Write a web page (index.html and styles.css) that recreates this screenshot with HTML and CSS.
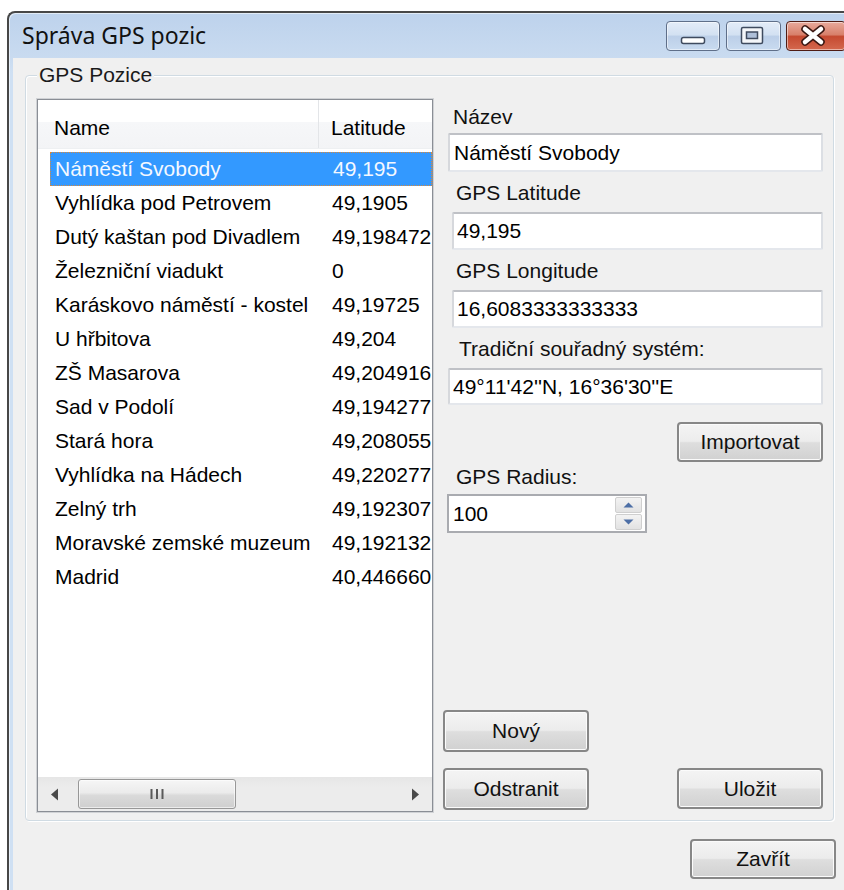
FILE: index.html
```html
<!DOCTYPE html>
<html lang="cs">
<head>
<meta charset="utf-8">
<title>Správa GPS pozic</title>
<link rel="stylesheet" href="styles.css">
</head>
<body>
<div class="window">
  <div class="titlebar">
    <span class="title">Správa GPS pozic</span>
    <div class="caption">
      <div class="cap-btn cap-min">
        <svg width="52" height="28" viewBox="0 0 52 28"><rect x="14.5" y="15.5" width="23" height="6" rx="2" fill="#fff" stroke="#3f4b5f" stroke-width="1.5"/></svg>
      </div>
      <div class="cap-btn cap-max">
        <svg width="53" height="28" viewBox="0 0 53 28"><rect x="14.5" y="5.5" width="21" height="16" rx="1.5" fill="#f4f6f9" stroke="#3f4b5f" stroke-width="1.5"/><rect x="19.5" y="10" width="11" height="6.5" fill="#aebfd8" stroke="#3f4b5f" stroke-width="1.5"/></svg>
      </div>
      <div class="cap-btn cap-close">
        <svg width="58" height="28" viewBox="0 0 58 28"><path d="M18 7 L34 20 M34 7 L18 20" stroke="#3a1712" stroke-width="7.5" stroke-linecap="round"/><path d="M18 7 L34 20 M34 7 L18 20" stroke="#fff" stroke-width="4.5" stroke-linecap="round"/></svg>
      </div>
    </div>
  </div>

  <div class="client">
    <div class="group">
      <span class="group-label">GPS Pozice</span>

      <div class="listview">
        <div class="lv-header">
          <div class="lv-head-name">Name</div>
          <div class="lv-head-lat">Latitude</div>
        </div>
        <div class="lv-body">
          <div class="lv-row selected"><span class="c-name">Náměstí Svobody</span><span class="c-lat">49,195</span></div>
          <div class="lv-row"><span class="c-name">Vyhlídka pod Petrovem</span><span class="c-lat">49,1905</span></div>
          <div class="lv-row"><span class="c-name">Dutý kaštan pod Divadlem</span><span class="c-lat">49,198472</span></div>
          <div class="lv-row"><span class="c-name">Železniční viadukt</span><span class="c-lat">0</span></div>
          <div class="lv-row"><span class="c-name">Karáskovo náměstí - kostel</span><span class="c-lat">49,19725</span></div>
          <div class="lv-row"><span class="c-name">U hřbitova</span><span class="c-lat">49,204</span></div>
          <div class="lv-row"><span class="c-name">ZŠ Masarova</span><span class="c-lat">49,204916</span></div>
          <div class="lv-row"><span class="c-name">Sad v Podolí</span><span class="c-lat">49,194277</span></div>
          <div class="lv-row"><span class="c-name">Stará hora</span><span class="c-lat">49,208055</span></div>
          <div class="lv-row"><span class="c-name">Vyhlídka na Hádech</span><span class="c-lat">49,220277</span></div>
          <div class="lv-row"><span class="c-name">Zelný trh</span><span class="c-lat">49,192307</span></div>
          <div class="lv-row"><span class="c-name">Moravské zemské muzeum</span><span class="c-lat">49,192132</span></div>
          <div class="lv-row"><span class="c-name">Madrid</span><span class="c-lat">40,446660</span></div>
        </div>
        <div class="hscroll">
          <div class="sb-arrow">
            <svg width="10" height="13" viewBox="0 0 10 13"><path d="M8 0.5 L1 6.5 L8 12.5 Z" fill="#4a4a4a"/></svg>
          </div>
          <div class="sb-track">
            <div class="sb-thumb">
              <svg width="16" height="12" viewBox="0 0 16 12"><path d="M2.5 1 V11 M8 1 V11 M13.5 1 V11" stroke="#5a5a5a" stroke-width="2"/></svg>
            </div>
          </div>
          <div class="sb-arrow">
            <svg width="10" height="13" viewBox="0 0 10 13"><path d="M2 0.5 L9 6.5 L2 12.5 Z" fill="#4a4a4a"/></svg>
          </div>
        </div>
      </div>

      <div class="editor">
        <div class="lbl lbl-name">Název</div>
        <div class="field field-name">Náměstí Svobody</div>
        <div class="lbl lbl-lat">GPS Latitude</div>
        <div class="field field-lat">49,195</div>
        <div class="lbl lbl-lon">GPS Longitude</div>
        <div class="field field-lon">16,6083333333333</div>
        <div class="lbl lbl-trad">Tradiční souřadný systém:</div>
        <div class="field field-trad">49°11'42''N, 16°36'30''E</div>
        <button class="btn btn-import">Importovat</button>
        <div class="lbl lbl-rad">GPS Radius:</div>
        <div class="spin">
          <span class="spin-value">100</span>
          <div class="spin-buttons">
            <div class="spin-btn"><svg width="11" height="6" viewBox="0 0 11 6"><path d="M0.5 5.5 L5.5 0.5 L10.5 5.5 Z" fill="#4d6fa6"/></svg></div>
            <div class="spin-btn"><svg width="11" height="6" viewBox="0 0 11 6"><path d="M0.5 0.5 L5.5 5.5 L10.5 0.5 Z" fill="#4d6fa6"/></svg></div>
          </div>
        </div>
        <div class="actions">
          <button class="btn">Nový</button>
          <div class="actions-row">
            <button class="btn">Odstranit</button>
            <button class="btn">Uložit</button>
          </div>
        </div>
      </div>
    </div>

    <div class="footer">
      <button class="btn">Zavřít</button>
    </div>
  </div>
</div>
</body>
</html>
```

FILE: styles.css
```css
html, body {
  margin: 0;
  height: 100%;
  overflow: hidden;
  background: #ffffff;
}

body {
  font-family: "Liberation Sans", Arial, sans-serif;
  font-size: 21px;
  color: #000;
}

/* window frame */
.window {
  margin: 11px 0 0 7px;
  width: 846px;
  height: 890px;
  border-top: 2px solid #474747;
  border-left: 2px solid #474747;
  border-top-left-radius: 8px;
  background: linear-gradient(to bottom, #bdd2ec 0px, #c9dbf0 45px, #cfe0f3 60px, #cfe0f3 100%);
  box-shadow: inset 1px 1px 0 rgba(255, 255, 255, 0.55);
  display: flex;
  flex-direction: column;
}

.titlebar {
  height: 45px;
  flex: none;
  display: flex;
  align-items: flex-start;
  padding: 0 9px 0 13px;
}

.title {
  font-family: "Noto Sans", "Open Sans", sans-serif;
  font-size: 23px;
  line-height: 45px;
  color: #111;
}

.caption {
  margin-left: auto;
  display: flex;
  margin-top: 8px;
}

.cap-btn {
  height: 28px;
  border: 1px solid #5f6f89;
  border-radius: 4px;
  box-shadow: inset 0 0 0 1px rgba(255, 255, 255, 0.5);
  display: flex;
}

.cap-min {
  width: 52px;
  background: linear-gradient(to bottom, #e3ecf8 0%, #d3e1f2 45%, #bccfe8 52%, #c9dbf0 100%);
}

.cap-max {
  width: 53px;
  margin-left: 6px;
  background: linear-gradient(to bottom, #e3ecf8 0%, #d3e1f2 45%, #bccfe8 52%, #c9dbf0 100%);
}

.cap-close {
  width: 58px;
  margin-left: 5px;
  border-color: #4f1c14;
  background: linear-gradient(to bottom, #e8aa9c 0%, #d8806b 45%, #c54a31 52%, #d4684e 100%);
}

/* client area */
.client {
  flex: 1;
  margin-left: 4px;
  background: #f0f0f0;
  padding: 17px 0 0 12px;
}

.group {
  position: relative;
  box-sizing: border-box;
  width: 809px;
  height: 746px;
  border: 1px solid #d0dbe3;
  border-radius: 4px;
  box-shadow: inset 1px 1px 0 #fff, 1px 1px 0 #fff;
  padding: 23px 10px 7px 11px;
  display: flex;
  gap: 10px;
}

.group-label {
  position: absolute;
  top: -13px;
  left: 11px;
  padding: 0 2px;
  line-height: 24px;
  background: #f0f0f0;
  color: #1a1a1a;
}

/* list view */
.listview {
  box-sizing: border-box;
  width: 396px;
  height: 713px;
  border: 1px solid #8a8e95;
  box-shadow: 0 0 0 1px rgba(150, 155, 162, 0.35);
  background: #fff;
  display: flex;
  flex-direction: column;
  overflow: hidden;
}

.lv-header {
  height: 49px;
  flex: none;
  display: flex;
  background: linear-gradient(to bottom, #ffffff 0%, #ffffff 45%, #f6f7f9 46%, #f3f4f6 100%);
  border-bottom: 1px solid #eef0f2;
  box-sizing: border-box;
}

.lv-head-name,
.lv-head-lat {
  padding-top: 16px;
  line-height: 24px;
  white-space: nowrap;
}

.lv-head-name {
  box-sizing: border-box;
  width: 281px;
  padding-left: 16px;
  border-right: 1px solid #e3e5e8;
}

.lv-head-lat {
  padding-left: 12px;
}

.lv-body {
  flex: 1;
  padding-top: 3px;
}

.lv-row {
  height: 34px;
  margin-left: 12px;
  display: flex;
  align-items: center;
  line-height: 24px;
  white-space: nowrap;
  box-sizing: border-box;
}

.c-name {
  box-sizing: border-box;
  width: 269px;
  flex: none;
  padding-left: 5px;
  overflow: hidden;
}

.c-lat {
  padding-left: 13px;
  overflow: hidden;
}

.lv-row.selected {
  background: #3399ff;
  color: #f4f8ff;
  border: 1px dotted #d9893a;
}

.lv-row.selected .c-name {
  padding-left: 4px;
}

/* horizontal scrollbar */
.hscroll {
  height: 34px;
  flex: none;
  display: flex;
  align-items: center;
  background: linear-gradient(to bottom, #e6e6e6 0%, #ececec 30%, #ececec 100%);
}

.sb-arrow {
  width: 34px;
  height: 100%;
  display: flex;
  align-items: center;
  justify-content: center;
  flex: none;
}

.sb-track {
  flex: 1;
  height: 100%;
  display: flex;
  align-items: center;
}

.sb-thumb {
  box-sizing: border-box;
  width: 158px;
  height: 30px;
  margin-left: 6px;
  border: 1px solid #979797;
  border-radius: 3px;
  background: linear-gradient(to bottom, #f6f6f6 0%, #ebebeb 45%, #dadada 55%, #cfcfcf 100%);
  box-shadow: inset 0 0 0 1px rgba(255, 255, 255, 0.6);
  display: flex;
  align-items: center;
  justify-content: center;
}

/* editor column */
.editor {
  width: 380px;
  display: flex;
  flex-direction: column;
  padding-bottom: 3px;
  box-sizing: border-box;
}

.lbl {
  line-height: 24px;
  white-space: nowrap;
  color: #111;
}

.field {
  box-sizing: border-box;
  background: #fff;
  border: 2px solid;
  border-color: #bfc1c6 #dcdfe4 #e4e7ec #d6d8dc;
  border-radius: 2px;
  display: flex;
  align-items: center;
  line-height: 24px;
  white-space: nowrap;
  overflow: hidden;
}

.lbl-name { margin: 6px 0 0 10px; }
.field-name { margin: 4px 0 0 5px; width: 375px; height: 39px; padding-left: 4px; }

.lbl-lat { margin: 9px 0 0 13px; }
.field-lat { margin: 7px 0 0 9px; width: 371px; height: 38px; padding-left: 3px; }

.lbl-lon { margin: 9px 0 0 13px; }
.field-lon { margin: 7px 0 0 9px; width: 371px; height: 38px; padding-left: 3px; }

.lbl-trad { margin: 9px 0 0 16px; }
.field-trad { margin: 7px 0 0 5px; width: 375px; height: 37px; padding-left: 3px; }

.lbl-rad { margin: 3px 0 0 13px; }

/* buttons */
.btn {
  box-sizing: border-box;
  width: 146px;
  height: 41px;
  padding: 0;
  font-family: "Liberation Sans", Arial, sans-serif;
  font-size: 21px;
  color: #111;
  border: 2px solid #878787;
  border-radius: 4px;
  background: linear-gradient(to bottom, #f4f4f4 0%, #ececec 48%, #dedede 52%, #d1d1d1 100%);
  box-shadow: inset 0 0 0 1px #fbfbfb;
}

.btn-import {
  align-self: flex-end;
  margin-top: 17px;
  height: 40px;
}

/* numeric up/down */
.spin {
  box-sizing: border-box;
  margin: 5px 0 0 4px;
  width: 200px;
  height: 39px;
  background: #fff;
  border: 2px solid #a9abb0;
  display: flex;
  align-items: center;
}

.spin-value {
  flex: 1;
  padding-left: 4px;
  line-height: 24px;
}

.spin-buttons {
  width: 27px;
  height: 33px;
  margin-right: 3px;
  display: flex;
  flex-direction: column;
  gap: 1px;
}

.spin-btn {
  flex: 1;
  display: flex;
  align-items: center;
  justify-content: center;
  background: linear-gradient(to bottom, #f3f3f3, #e2e2e2);
  border: 1px solid #cfcfcf;
  border-radius: 2px;
}

.actions {
  margin-top: auto;
  display: flex;
  flex-direction: column;
}

.actions .btn:first-child {
  height: 42px;
}

.actions-row {
  margin-top: 16px;
  display: flex;
  justify-content: space-between;
}

.footer {
  margin-top: 18px;
  padding-left: 665px;
}

.footer .btn {
  height: 40px;
}
```
